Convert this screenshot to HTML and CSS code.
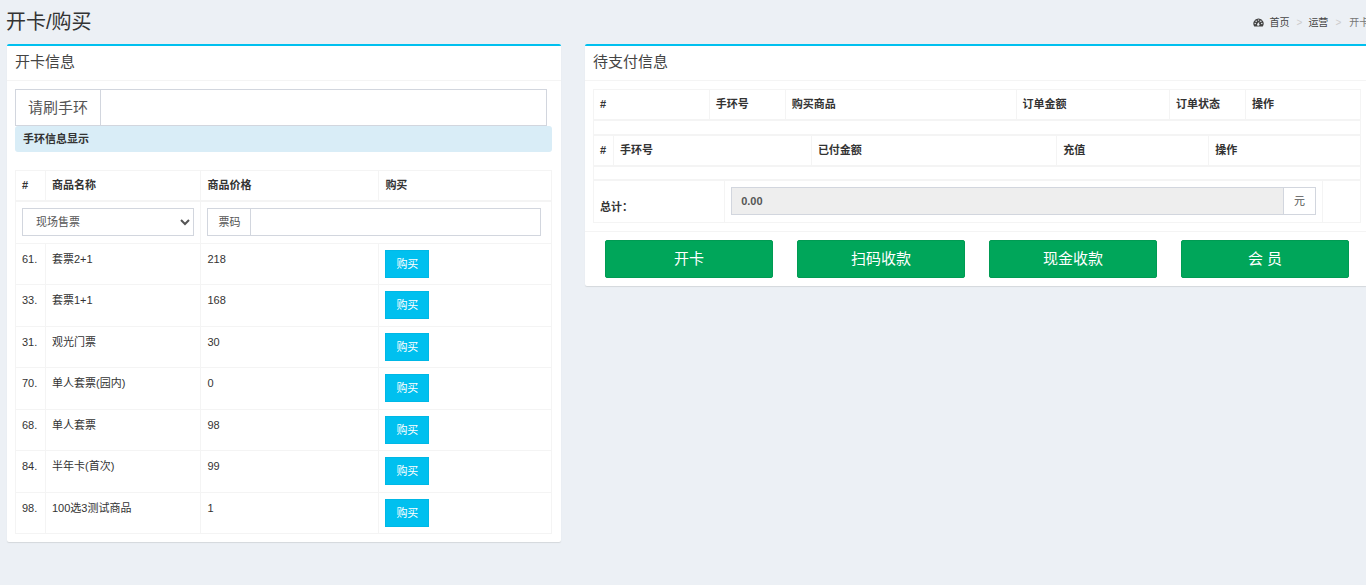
FILE: index.html
```html
<!DOCTYPE html>
<html lang="zh-CN">
<head>
<meta charset="utf-8">
<title>开卡/购买</title>
<link rel="stylesheet" href="styles.css">
</head>
<body>
<header class="content-header">
  <h1>开卡/购买</h1>
  <nav aria-label="breadcrumb">
    <ol class="breadcrumb">
      <li><a href="#"><svg class="dash-icon" viewBox="0 0 20 17" aria-hidden="true"><path fill="#444" d="M10 1a9.500 9.500 0 0 0-8 15h16A9.500 9.500 0 0 0 10 1z"/><g fill="#ecf0f5"><circle cx="3.800" cy="10.500" r="1.400"/><circle cx="5.600" cy="6" r="1.400"/><circle cx="10" cy="4" r="1.400"/><circle cx="14.400" cy="6" r="1.400"/><circle cx="16.200" cy="10.500" r="1.400"/><path d="M11.800 6.300 10.900 10.300a2.300 2.300 0 1 1-1.600-.4z"/></g></svg>首页</a></li>
      <li><a href="#">运营</a></li>
      <li class="current" aria-current="page">开卡/购买</li>
    </ol>
  </nav>
</header>
<main class="content">
  <section class="box">
    <h2 class="box-title">开卡信息</h2>
    <div class="box-body">
      <div class="input-group band-group">
        <label for="band">请刷手环</label>
        <input id="band" type="text">
      </div>
      <div class="alert">手环信息显示</div>
      <table class="table goods">
        <colgroup><col class="g-id"><col class="g-name"><col class="g-price"><col></colgroup>
        <thead><tr><th>#</th><th>商品名称</th><th>商品价格</th><th>购买</th></tr></thead>
        <tbody>
          <tr>
            <td colspan="2"><select class="channel" aria-label="售票方式"><option>现场售票</option></select></td>
            <td colspan="2"><div class="input-group code-group"><label for="code">票码</label><input id="code" type="text"></div></td>
          </tr>
          <tr><td>61.</td><td>套票2+1</td><td>218</td><td><button class="buy" type="button">购买</button></td></tr>
          <tr><td>33.</td><td>套票1+1</td><td>168</td><td><button class="buy" type="button">购买</button></td></tr>
          <tr><td>31.</td><td>观光门票</td><td>30</td><td><button class="buy" type="button">购买</button></td></tr>
          <tr><td>70.</td><td>单人套票(园内)</td><td>0</td><td><button class="buy" type="button">购买</button></td></tr>
          <tr><td>68.</td><td>单人套票</td><td>98</td><td><button class="buy" type="button">购买</button></td></tr>
          <tr><td>84.</td><td>半年卡(首次)</td><td>99</td><td><button class="buy" type="button">购买</button></td></tr>
          <tr><td>98.</td><td>100选3测试商品</td><td>1</td><td><button class="buy" type="button">购买</button></td></tr>
        </tbody>
      </table>
    </div>
  </section>
  <section class="box pay-box">
    <h2 class="box-title">待支付信息</h2>
    <div class="box-body">
      <table class="table orders">
        <colgroup><col class="o-id"><col class="o-band"><col class="o-goods"><col class="o-sum"><col class="o-state"><col></colgroup>
        <thead><tr><th>#</th><th>手环号</th><th>购买商品</th><th>订单金额</th><th>订单状态</th><th>操作</th></tr></thead>
        <tbody><tr class="empty"><td colspan="6"></td></tr></tbody>
      </table>
      <table class="table paid">
        <colgroup><col class="p-id"><col class="p-band"><col class="p-sum"><col class="p-charge"><col></colgroup>
        <thead><tr><th>#</th><th>手环号</th><th>已付金额</th><th>充值</th><th>操作</th></tr></thead>
        <tbody><tr class="empty"><td colspan="5"></td></tr></tbody>
      </table>
      <table class="table total">
        <colgroup><col class="t-label"><col><col class="t-end"></colgroup>
        <tbody><tr>
          <th scope="row"><label for="total">总计：</label></th>
          <td><div class="input-group total-group"><input id="total" type="text" value="0.00" readonly><span class="unit">元</span></div></td>
          <td></td>
        </tr></tbody>
      </table>
    </div>
    <footer class="actions">
      <button type="button">开卡</button>
      <button type="button">扫码收款</button>
      <button type="button">现金收款</button>
      <button type="button">会 员</button>
    </footer>
  </section>
</main>
</body>
</html>
```
FILE: styles.css
```css
* { box-sizing: border-box; }
body {
  margin: 0;
  min-height: 100vh;
  overflow-x: hidden;
  background: #ecf0f5;
  color: #333;
  font: 11px/16px "Liberation Sans", "Noto Sans CJK SC", sans-serif;
}
button, input, select { margin: 0; font: inherit; color: inherit; }
h1, h2 { margin: 0; font-weight: 400; }

.content-header {
  display: flex;
  justify-content: space-between;
  align-items: center;
  height: 44px;
  padding-left: 6px;
  overflow: hidden;
}
.content-header h1 { font-size: 20px; line-height: 28px; }
.breadcrumb {
  display: flex;
  margin: 0 -26px 0 0;
  padding: 2px 0 0;
  list-style: none;
  font-size: 10px;
  white-space: nowrap;
}
.breadcrumb a { color: #444; text-decoration: none; }
.breadcrumb li + li::before { content: ">"; padding: 0 6px 0 7px; color: #ccc; }
.breadcrumb .current { color: #777; }
.breadcrumb .current::before { padding-right: 8px; }
.dash-icon { width: 11px; height: 9px; margin-right: 6px; vertical-align: -1px; }

.content {
  display: grid;
  grid-template-columns: 554fr 781fr;
  gap: 24px;
  align-items: start;
  padding-left: 7px;
}
.box {
  min-width: 0;
  background: #fff;
  border-top: 2px solid #00c0ef;
  border-radius: 2px;
  box-shadow: 0 1px 1px rgba(0, 0, 0, .1);
}
.pay-box { border-top-right-radius: 0; border-bottom-right-radius: 0; }
.box-title {
  padding: 6px 8px 8px;
  border-bottom: 1px solid #f4f4f4;
  color: #444;
  font-size: 15px;
  line-height: 20px;
}
.box-body { padding: 8px 9px 8px 8px; }
.pay-box .box-body { padding-right: 5px; }

.input-group { display: flex; }
.input-group label, .unit {
  display: flex;
  align-items: center;
  justify-content: center;
  border: 1px solid #d2d6de;
  color: #555;
}
.input-group input {
  flex: 1;
  min-width: 0;
  padding: 0 9px;
  border: 1px solid #d2d6de;
  border-radius: 0;
  background: #fff;
  outline: 0;
}
.input-group label { border-right: 0; }
.band-group { height: 37px; margin-right: 5px; }
.band-group label { width: 85px; font-size: 15px; }
.code-group { height: 28px; margin-right: 4px; }
.code-group label { width: 43px; }
.total-group { height: 28px; }
.total-group input { background: #eee; font-weight: 700; color: #555; }
.unit { width: 32px; border-left: 0; }

.alert {
  margin-bottom: 18px;
  padding: 5px 8px;
  border-radius: 3px;
  background: #d9edf7;
  font-weight: 700;
}

.table { width: 100%; table-layout: fixed; border-collapse: collapse; }
.table th, .table td {
  padding: 7px 6px;
  border: 1px solid #f4f4f4;
  text-align: left;
  vertical-align: top;
}
.table thead th { padding-top: 6px; border-bottom-width: 2px; }
.table .empty td { height: 14px; padding: 0; }

.goods tbody tr { height: 41px; }
.goods tbody tr:nth-child(odd) { height: 42px; }
.goods tbody td { padding-bottom: 6px; }
.goods td:last-child, .goods tbody tr:first-child td { padding-top: 6px; }
.g-id { width: 30px; }
.g-name { width: 29%; }
.g-price { width: 33.2%; }
.channel {
  display: block;
  width: 100%;
  height: 28px;
  padding: 0 0 0 9px;
  border: 1px solid #d2d6de;
  border-radius: 0;
  background: #fff;
  color: #555;
}
.buy {
  display: block;
  width: 44px;
  height: 28px;
  padding: 0;
  border: 1px solid #00b8e6;
  background: #00c0ef;
  color: #fff;
}

.o-id { width: 15.1%; }
.o-band { width: 9.9%; }
.o-goods { width: 30.1%; }
.o-sum { width: 20%; }
.o-state { width: 9.9%; }
.p-id { width: 20px; }
.p-band { width: 25.8%; }
.p-sum { width: 32%; }
.p-charge { width: 19.8%; }
.t-label { width: 17.1%; }
.t-end { width: 38px; }
.total th { padding-top: 18px; }
.total td { padding: 6px; }

.actions {
  display: grid;
  grid-template-columns: repeat(4, 1fr);
  gap: 24px;
  padding: 8px 17px 8px 20px;
  border-top: 1px solid #f4f4f4;
}
.actions button {
  height: 38px;
  padding: 0;
  border: 1px solid #009b53;
  border-radius: 2px;
  background: #00a65a;
  color: #fff;
  font-size: 15px;
}
```
